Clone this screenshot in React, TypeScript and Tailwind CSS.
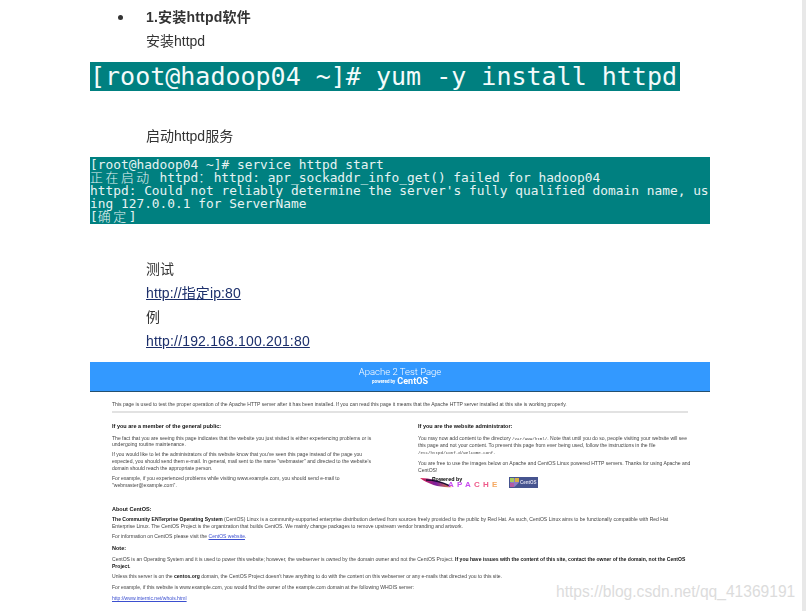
const body = { fontFamily: '"Liberation Sans", "Noto Sans CJK SC", sans-serif' }
const mono = { fontFamily: '"DejaVu Sans Mono", "Noto Sans CJK SC", monospace' }
const head = { fontFamily: 'Roboto, "Liberation Sans", sans-serif' }

const ApacheLogo = () => (
    <div className="relative w-[84px] h-[14px]">
        <svg width="84" height="14" viewBox="0 0 84 14" className="absolute left-0 top-0">
            <defs>
                <linearGradient id="feather" x1="0" x2="1" y1="0" y2="0">
                    <stop offset="0" stopColor="#e0204a" />
                    <stop offset="0.5" stopColor="#7a1f9f" />
                    <stop offset="1" stopColor="#f08a30" />
                </linearGradient>
            </defs>
            <path d="M0 2 C10 2 20 5 32 11 C22 12 9 9 0 2 Z" fill="url(#feather)" />
            <path d="M6 4 C14 4 22 6 30 10" stroke="#1a0d33" strokeWidth="1.4" fill="none" />
        </svg>
        <span className="absolute left-[12px] top-[0px] text-[5.4px] leading-[6px] font-bold text-black">Powered by</span>
        <span className="absolute left-[28px] top-[5px] text-[8px] leading-[8px] tracking-[3.2px] font-bold text-[#c94cf0]">
            APA<span className="text-[#ef5a8a]">CH</span><span className="text-[#f5a860]">E</span>
        </span>
    </div>
)

const CentosLogo = () => (
    <div className="w-[29px] h-[11px] bg-[#46548f] flex items-center gap-[1px] px-[1px]">
        <svg width="9" height="9" viewBox="0 0 9 9">
            <path d="M4.5 0 L9 4.5 L4.5 9 L0 4.5 Z" fill="#8d7cc4" />
            <path d="M0 0 H4 V4 H0 Z" fill="#a8cc5a" />
            <path d="M5 0 H9 V4 H5 Z" fill="#d8b048" />
            <path d="M0 5 H4 V9 H0 Z" fill="#b45aa4" />
        </svg>
        <span className="text-[4.5px] leading-[5px] text-[#dde] font-bold">CentOS</span>
    </div>
)

const TestPage = () => (
    <div className="w-[620px] h-[249px] overflow-hidden bg-white text-[5.05px] leading-[6.8px] text-[#444] blur-[0.35px]">
        {/* Blue header */}
        <div className="h-[30px] bg-[#3399ff] border-b border-[#24506f] flex flex-col items-center pt-[4px] text-white" style={head}>
            <span className="text-[9.5px] leading-[11px] font-light">Apache 2 Test Page</span>
            <span className="text-[4.5px] leading-[9px] font-bold flex items-center gap-[2px]">powered by <span className="text-[9px] leading-[9px]">CentOS</span></span>
        </div>

        <div className="px-[22px]">
            <p className="pt-[8.5px]">This page is used to test the proper operation of the Apache HTTP server after it has been installed. If you can read this page it means that the Apache HTTP server installed at this site is working properly.</p>
            <div className="h-[2px] bg-[#e2e2e2] mt-[3.5px]"></div>

            {/* Two columns */}
            <div className="flex mt-[10px] gap-[41px] h-[80px] whitespace-nowrap">
                <div className="w-[265px]">
                    <p className="text-[5.5px] font-bold text-[#111]">If you are a member of the general public:</p>
                    <p className="mt-[5px]">The fact that you are seeing this page indicates that the website you just visited is either experiencing problems or is<br />undergoing routine maintenance.</p>
                    <p className="mt-[3.2px]">If you would like to let the administrators of this website know that you've seen this page instead of the page you<br />expected, you should send them e-mail. In general, mail sent to the name "webmaster" and directed to the website's<br />domain should reach the appropriate person.</p>
                    <p className="mt-[3.2px]">For example, if you experienced problems while visiting www.example.com, you should send e-mail to<br />"webmaster@example.com".</p>
                </div>
                <div className="w-[270px]">
                    <p className="text-[5.5px] font-bold text-[#111]">If you are the website administrator:</p>
                    <p className="mt-[5px]">You may now add content to the directory <span className="font-mono text-[4.2px]">/var/www/html/</span>. Note that until you do so, people visiting your website will see<br />this page and not your content. To prevent this page from ever being used, follow the instructions in the file<br /><span className="font-mono text-[4.2px]">/etc/httpd/conf.d/welcome.conf</span>.</p>
                    <p className="mt-[3.2px]">You are free to use the images below on Apache and CentOS Linux powered HTTP servers. Thanks for using Apache and<br />CentOS!</p>
                    <div className="flex items-center gap-[5px] mt-[2px] ml-[2px]">
                        <ApacheLogo />
                        <CentosLogo />
                    </div>
                </div>
            </div>

            {/* About */}
            <p className="mt-[3px] text-[5.5px] font-bold text-[#111]">About CentOS:</p>
            <p className="mt-[3.4px]"><b className="text-[#111]">The Community ENTerprise Operating System</b> (CentOS) Linux is a community-supported enterprise distribution derived from sources freely provided to the public by Red Hat. As such, CentOS Linux aims to be functionally compatible with Red Hat<br />Enterprise Linux. The CentOS Project is the organization that builds CentOS. We mainly change packages to remove upstream vendor branding and artwork.</p>
            <p className="mt-[3.4px]">For information on CentOS please visit the <span className="text-[#3b4fd0] underline">CentOS website</span>.</p>
            <p className="mt-[5px] text-[5.5px] font-bold text-[#111]">Note:</p>
            <p className="mt-[4.2px]">CentOS is an Operating System and it is used to power this website; however, the webserver is owned by the domain owner and not the CentOS Project. <b className="text-[#111]">If you have issues with the content of this site, contact the owner of the domain, not the CentOS<br />Project.</b></p>
            <p className="mt-[3.6px]">Unless this server is on the <b className="text-[#111]">centos.org</b> domain, the CentOS Project doesn't have anything to do with the content on this webserver or any e-mails that directed you to this site.</p>
            <p className="mt-[4.2px]">For example, if this website is www.example.com, you would find the owner of the example.com domain at the following WHOIS server:</p>
            <p className="mt-[4.2px] text-[#3b4fd0] underline">http://www.internic.net/whois.html</p>
        </div>
    </div>
)

const App = () => {
    return (
        <div className="relative flex h-[611px] w-[806px] overflow-hidden bg-white text-[#333] text-[14px]" style={body}>
            <div className="w-[802px] pl-[90px]">
                {/* 1. install */}
                <div className="pl-[56px] pt-[5px] blur-[0.25px]">
                    <div className="relative h-[24px] leading-[24px] font-bold tracking-[0.2px]">
                        <span className="absolute -left-[28px] top-[10px] w-[5px] h-[5px] rounded-full bg-[#333]"></span>
                        1.安装httpd软件
                    </div>
                    <div className="h-[24px] leading-[24px]">安装httpd</div>
                </div>

                <div className="mt-[9px] w-[590px] h-[29px] bg-[#008080] text-[#f4fbfb] text-[25px] leading-[29px] whitespace-pre" style={mono}>[root@hadoop04 ~]# yum -y install httpd</div>

                <div className="pl-[56px] mt-[33px] h-[24px] leading-[24px] blur-[0.25px]">启动httpd服务</div>

                {/* service start output */}
                <div className="mt-[9px] w-[620px] h-[67px] bg-[#008080] text-[#e6f3f3] text-[12.85px] leading-[13px] whitespace-pre overflow-hidden pt-[1px]" style={mono}>
                    <div>[root@hadoop04 ~]# service httpd start</div>
                    <div><span className="tracking-[2.6px] font-light">正在启动</span> httpd<span className="tracking-[2.6px] font-light">：</span>httpd: apr_sockaddr_info_get() failed for hadoop04</div>
                    <div>httpd: Could not reliably determine the server's fully qualified domain name, us</div>
                    <div>ing 127.0.0.1 for ServerName</div>
                    <div>[<span className="tracking-[2.6px] font-light">确定</span>]</div>
                </div>

                {/* test links */}
                <div className="pl-[56px] mt-[33px] leading-[24px] blur-[0.25px]">
                    <div className="h-[24px]">测试</div>
                    <div className="h-[24px] text-[#1c2f6b] underline tracking-[0.1px]">http://指定ip:80</div>
                    <div className="h-[24px]">例</div>
                    <div className="h-[24px] text-[#1c2f6b] underline tracking-[0.17px]">http://192.168.100.201:80</div>
                </div>

                <div className="mt-[9px]">
                    <TestPage />
                </div>
            </div>

            {/* scrollbar strip */}
            <div className="w-[4px] h-full bg-[#e8e8e8]"></div>

            {/* csdn watermark */}
            <span className="absolute left-[556px] top-[581px] text-[15.6px] leading-[22px] text-[#dcdcdc]">https://blog.csdn.net/qq_41369191</span>
        </div>
    )
}

export default App
